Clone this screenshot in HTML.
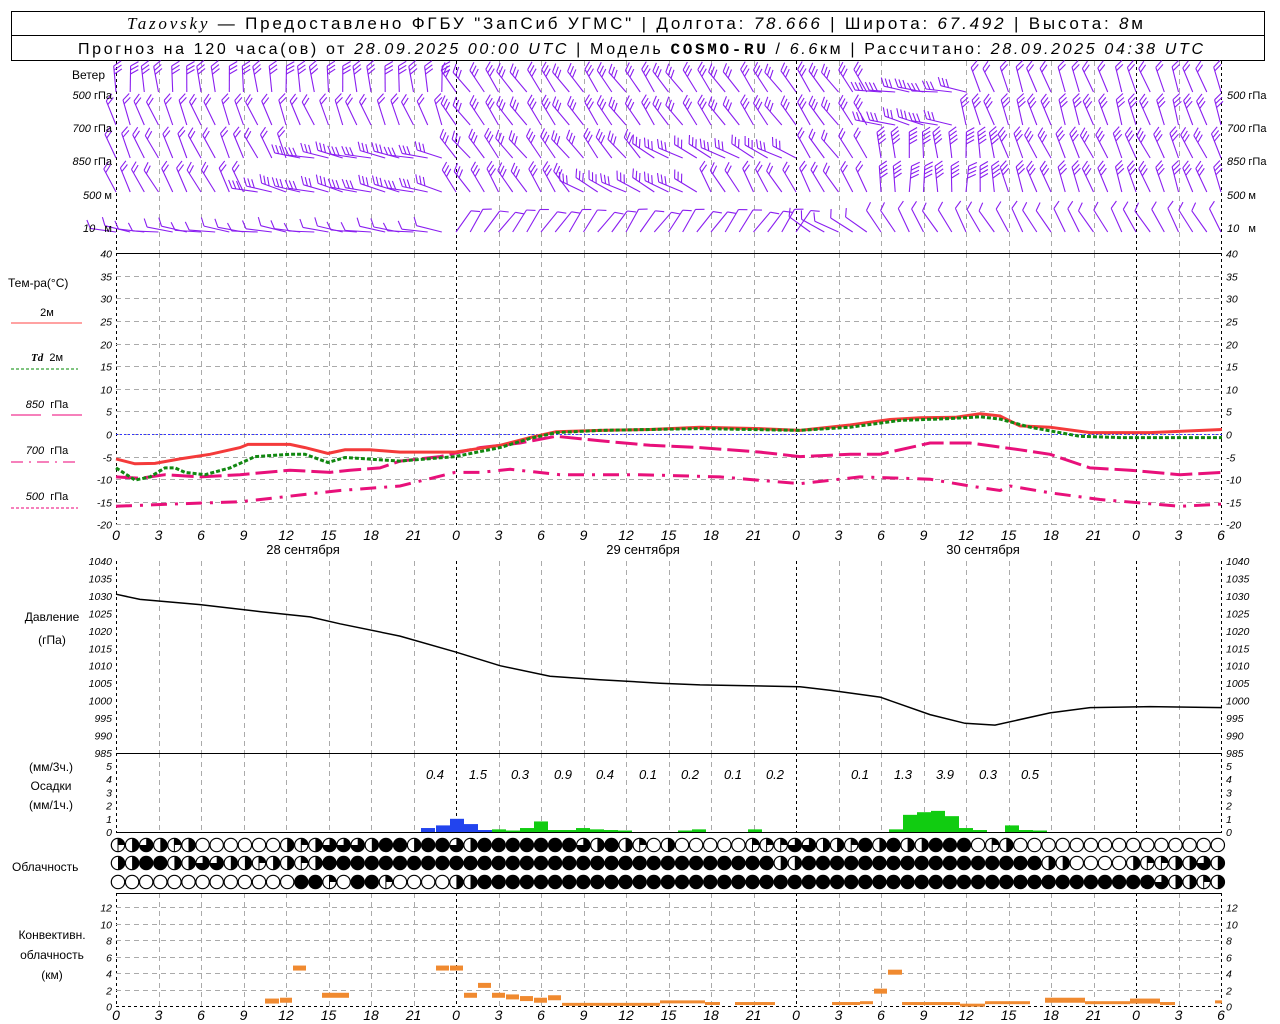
<!DOCTYPE html>
<html><head><meta charset="utf-8"><style>
html,body{margin:0;padding:0;background:#fff;}
svg{display:block;}
text{font-family:"Liberation Sans",sans-serif;}
.t{font-size:10.5px;font-style:italic;fill:#000;}
.l{font-size:12px;fill:#000;}
.ax{font-size:14px;font-style:italic;}
</style></head><body>
<svg id="s" width="1280" height="1024" viewBox="0 0 1280 1024" xmlns="http://www.w3.org/2000/svg">
<rect width="1280" height="1024" fill="#fff"/>
<rect x="11.5" y="11.5" width="1253" height="49" fill="none" stroke="#000"/>
<line x1="11" y1="35.5" x2="1265" y2="35.5" stroke="#000"/>
<text x="127" y="29" font-size="17" textLength="1016" lengthAdjust="spacing"><tspan font-family="Liberation Serif" font-style="italic">Tazovsky</tspan> — Предоставлено ФГБУ "ЗапСиб УГМС" | Долгота: <tspan font-style="italic">78.666</tspan> | Широта: <tspan font-style="italic">67.492</tspan> | Высота: <tspan font-style="italic">8</tspan>м</text>
<text x="78" y="54" font-size="16" textLength="1125" lengthAdjust="spacing">Прогноз на 120 часа(ов) от <tspan font-style="italic">28.09.2025 00:00 UTC</tspan> | Модель <tspan font-family="Liberation Mono" font-weight="bold">COSMO-RU</tspan> / <tspan font-style="italic">6.6</tspan>км | Рассчитано: <tspan font-style="italic">28.09.2025 04:38 UTC</tspan></text>

<g id="grid"></g>
<g id="wind"></g>
<g id="series"></g>
<g id="clouds"></g>

<g class="l">
<text x="72" y="79" font-size="12">Ветер</text>
<text x="112" y="99" text-anchor="end" font-size="11"><tspan font-style="italic">500</tspan> гПа</text>
<text x="112" y="132" text-anchor="end" font-size="11"><tspan font-style="italic">700</tspan> гПа</text>
<text x="112" y="165" text-anchor="end" font-size="11"><tspan font-style="italic">850</tspan> гПа</text>
<text x="112" y="199" text-anchor="end" font-size="11"><tspan font-style="italic">500</tspan> м</text>
<text x="112" y="232" text-anchor="end" font-size="11"><tspan font-style="italic">10</tspan>&#160;&#160;&#160;м</text>
<text x="1227" y="99" font-size="11"><tspan font-style="italic">500</tspan> гПа</text>
<text x="1227" y="132" font-size="11"><tspan font-style="italic">700</tspan> гПа</text>
<text x="1227" y="165" font-size="11"><tspan font-style="italic">850</tspan> гПа</text>
<text x="1227" y="199" font-size="11"><tspan font-style="italic">500</tspan> м</text>
<text x="1227" y="232" font-size="11"><tspan font-style="italic">10</tspan>&#160;&#160;&#160;м</text>

<text x="8" y="287" font-size="12">Тем-ра(°С)</text>
<text x="47" y="316" font-size="11" text-anchor="middle">2м</text>
<line x1="11" y1="323" x2="82" y2="323" stroke="#f44"/>
<text x="47" y="361" font-size="11" text-anchor="middle"><tspan font-family="Liberation Serif" font-style="italic" font-weight="bold">Td</tspan>&#160;&#160;2м</text>
<line x1="11" y1="369" x2="78" y2="369" stroke="#080" stroke-dasharray="3,2"/>
<text x="47" y="408" font-size="11" text-anchor="middle"><tspan font-style="italic">850</tspan>&#160;&#160;гПа</text>
<line x1="11" y1="415" x2="41" y2="415" stroke="#e07"/><line x1="52" y1="415" x2="82" y2="415" stroke="#e07"/>
<text x="47" y="454" font-size="11" text-anchor="middle"><tspan font-style="italic">700</tspan>&#160;&#160;гПа</text>
<line x1="11" y1="462" x2="78" y2="462" stroke="#e07" stroke-dasharray="12,6,2,6"/>
<text x="47" y="500" font-size="11" text-anchor="middle"><tspan font-style="italic">500</tspan>&#160;&#160;гПа</text>
<line x1="11" y1="508" x2="78" y2="508" stroke="#e07" stroke-dasharray="3,2"/>

<text x="52" y="621" font-size="12" text-anchor="middle">Давление</text>
<text x="52" y="644" font-size="12" text-anchor="middle">(гПа)</text>

<text x="51" y="771" font-size="12" text-anchor="middle">(мм/3ч.)</text>
<text x="51" y="790" font-size="12" text-anchor="middle">Осадки</text>
<text x="51" y="809" font-size="12" text-anchor="middle">(мм/1ч.)</text>

<text x="12" y="871" font-size="12">Облачность</text>

<text x="52" y="939" font-size="12" text-anchor="middle">Конвективн.</text>
<text x="52" y="959" font-size="12" text-anchor="middle">облачность</text>
<text x="52" y="979" font-size="12" text-anchor="middle">(км)</text>

<text x="303" y="554" font-size="13" text-anchor="middle">28 сентября</text>
<text x="643" y="554" font-size="13" text-anchor="middle">29 сентября</text>
<text x="983" y="554" font-size="13" text-anchor="middle">30 сентября</text>

<g font-size="13" font-style="italic">
<text x="435" y="779" text-anchor="middle">0.4</text>
<text x="478" y="779" text-anchor="middle">1.5</text>
<text x="520" y="779" text-anchor="middle">0.3</text>
<text x="563" y="779" text-anchor="middle">0.9</text>
<text x="605" y="779" text-anchor="middle">0.4</text>
<text x="648" y="779" text-anchor="middle">0.1</text>
<text x="690" y="779" text-anchor="middle">0.2</text>
<text x="733" y="779" text-anchor="middle">0.1</text>
<text x="775" y="779" text-anchor="middle">0.2</text>
<text x="860" y="779" text-anchor="middle">0.1</text>
<text x="903" y="779" text-anchor="middle">1.3</text>
<text x="945" y="779" text-anchor="middle">3.9</text>
<text x="988" y="779" text-anchor="middle">0.3</text>
<text x="1030" y="779" text-anchor="middle">0.5</text>
</g>
</g>
<g id="ticks"></g>
</svg>
<script>
(function(){
function X(h){return 116+h*340/24;}
var g='',w='',s='',c='',t='';
var panels=[[61,253],[253,525],[561,753],[753,832],[893,1006]];
for(var k=0;k<=26;k++){
  var x=Math.round(X(k*3))+0.5;
  var day=(k%8==0)||k==26;
  panels.forEach(function(p){
    g+='<line x1="'+x+'" y1="'+p[0]+'" x2="'+x+'" y2="'+p[1]+'" stroke="'+(day?'#000':'#aaa')+'" stroke-dasharray="'+(day?'3,3':'5,4')+'"/>';
  });
}
function TY(d){return 434-d*4.52;}
for(var d=-20;d<=40;d+=5){
  var y=Math.round(TY(d))+0.5;
  if(d<40) g+='<line x1="116" y1="'+y+'" x2="1222" y2="'+y+'" stroke="#aaa" stroke-dasharray="5,4"/>';
  t+='<text class="t" x="112" y="'+(y+4)+'" text-anchor="end">'+d+'</text><text class="t" x="1226" y="'+(y+4)+'">'+d+'</text>';
}
g+='<line x1="116" y1="253.5" x2="1222" y2="253.5" stroke="#000"/>';
g+='<line x1="116" y1="434.5" x2="1222" y2="434.5" stroke="#33f" stroke-dasharray="2,2"/>';
function PY(p){return 561+(1040-p)*192/55;}
for(var p=985;p<=1040;p+=5){var y=PY(p);t+='<text class="t" x="112" y="'+(y+4)+'" text-anchor="end">'+p+'</text><text class="t" x="1226" y="'+(y+4)+'">'+p+'</text>';}
g+='<line x1="116" y1="753.5" x2="1222" y2="753.5" stroke="#000"/>';
for(var v=0;v<=5;v++){var y=832-v*13.2;t+='<text class="t" x="112" y="'+(y+4)+'" text-anchor="end">'+v+'</text><text class="t" x="1226" y="'+(y+4)+'">'+v+'</text>';}
g+='<line x1="116" y1="832.5" x2="1222" y2="832.5" stroke="#000"/>';
function CY(v){return 1006-v*8.25;}
g+='<line x1="116" y1="893.5" x2="1222" y2="893.5" stroke="#000"/>';
for(var v=0;v<=12;v+=2){var y=Math.round(CY(v))+0.5;
  if(v>0) g+='<line x1="116" y1="'+y+'" x2="1222" y2="'+y+'" stroke="#aaa" stroke-dasharray="5,4"/>';
  else g+='<line x1="116" y1="'+y+'" x2="1222" y2="'+y+'" stroke="#000" stroke-dasharray="3,3"/>';
  t+='<text class="t" x="112" y="'+(y+4)+'" text-anchor="end">'+v+'</text><text class="t" x="1226" y="'+(y+4)+'">'+v+'</text>';}
var hl=[0,3,6,9,12,15,18,21];
for(var k=0;k<=26;k++){var lab=hl[k%8];var x=X(k*3);
  t+='<text class="ax" x="'+x+'" y="540" text-anchor="middle">'+lab+'</text>';
  t+='<text class="ax" x="'+x+'" y="1020" text-anchor="middle">'+lab+'</text>';}
var rows=[[92,[[116,450,-5,3],[450,880,-35,3],[880,970,-82,3],[970,1223,-20,2]]],
[125,[[116,450,-22,2],[450,880,-35,3],[880,960,-75,3],[960,1223,-18,3]]],
[158,[[116,300,-25,2],[300,450,-78,3],[450,650,-38,3],[650,800,-62,3],[800,880,-35,2],[880,1000,-5,4],[1000,1223,-25,3]]],
[192,[[116,250,-28,2],[250,450,-76,3],[450,580,-32,3],[580,700,-62,3],[700,880,-30,2],[880,1000,0,4],[1000,1223,-20,3]]],
[232,[[116,450,-82,1],[450,800,35,1],[800,880,-60,1],[880,1223,-30,1]]]];
rows.forEach(function(r){
  var by=r[0];
  for(var i=0;i<=78;i++){
    var x=X(i);var seg=null;
    r[1].forEach(function(sg){if(x>=sg[0]&&x<sg[1])seg=sg;});
    if(!seg)continue;
    var a=(seg[2]+Math.sin(i*1.7)*6)*Math.PI/180,L=26;
    var tx=x+L*Math.sin(a),ty=by-L*Math.cos(a);
    w+='<line x1="'+x.toFixed(1)+'" y1="'+by+'" x2="'+tx.toFixed(1)+'" y2="'+ty.toFixed(1)+'"/>';
    var fa=a+Math.PI/3;
    for(var f=0;f<seg[3];f++){
      var px=tx-f*4*Math.sin(a),py=ty+f*4*Math.cos(a);
      w+='<line x1="'+px.toFixed(1)+'" y1="'+py.toFixed(1)+'" x2="'+(px+9*Math.sin(fa)).toFixed(1)+'" y2="'+(py-9*Math.cos(fa)).toFixed(1)+'"/>';
    }
  }
});
document.getElementById('wind').innerHTML='<g stroke="#8a1ef0" stroke-width="1.1" fill="none">'+w+'</g>';
function path(pts,fy){return pts.map(function(p,i){return (i?'L':'M')+p[0]+' '+fy(p[1]).toFixed(1);}).join(' ');}
var red=[[116,-5.5],[135,-6.6],[155,-6.5],[180,-5.5],[210,-4.5],[240,-3],[248,-2.3],[290,-2.3],[305,-3],[328,-4.3],[345,-3.5],[370,-3.5],[400,-4],[455,-4],[500,-2.5],[530,-0.8],[556,0.5],[600,0.8],[650,1],[700,1.5],[760,1.2],[800,0.8],[850,2],[890,3.2],[920,3.6],[955,3.7],[980,4.5],[1000,4],[1020,1.8],[1050,1.5],[1090,0.3],[1150,0.3],[1222,1]];
var grn=[[116,-7.5],[135,-10.2],[150,-9.5],[165,-7.5],[175,-7.5],[185,-8.5],[205,-9],[230,-7.5],[255,-5],[290,-4.5],[305,-4.5],[328,-6.3],[345,-5.2],[400,-6],[455,-5],[500,-3],[530,-1],[556,0.3],[600,0.8],[700,1.2],[800,0.8],[850,1.5],[900,3],[950,3.4],[980,3.8],[1000,3.3],[1030,1.5],[1080,-0.5],[1120,-0.8],[1222,-0.8]];
var p850=[[116,-9.5],[140,-9.8],[165,-9],[200,-9.5],[240,-9],[290,-8],[330,-8.5],[350,-8],[380,-7.5],[400,-6],[440,-5],[480,-3],[520,-2],[556,-0.5],[600,-1.5],[650,-2.5],[700,-3],[760,-4],[800,-5],[850,-4.5],[880,-4.5],[930,-2],[970,-2],[1020,-3.5],[1050,-4.5],[1090,-7.5],[1130,-8],[1180,-9],[1222,-8.5]];
var p500=[[116,-16],[170,-15.5],[240,-15],[300,-13.5],[340,-12.5],[400,-11.5],[455,-8.5],[480,-8.5],[510,-7.8],[560,-9],[640,-9],[720,-9.5],[800,-11],[860,-9.5],[930,-10],[970,-11.5],[1000,-12.5],[1010,-11.5],[1050,-13],[1100,-14.5],[1180,-16],[1222,-15.5]];
var pres=[[116,1030.5],[140,1029],[200,1027.5],[260,1025.5],[310,1024],[340,1022],[400,1018.5],[455,1014],[500,1010],[550,1007],[600,1006],[660,1005],[700,1004.5],[800,1004],[830,1003],[880,1001],[930,996],[965,993.5],[995,993],[1050,996.5],[1090,998],[1150,998.3],[1222,998]];
s+='<path d="'+path(p500,TY)+'" stroke="#e8107a" stroke-width="3" fill="none" stroke-dasharray="16,8,3,8"/>';
s+='<path d="'+path(p850,TY)+'" stroke="#e8107a" stroke-width="3" fill="none" stroke-dasharray="22,6"/>';
s+='<path d="'+path(red,TY)+'" stroke="#f43a3a" stroke-width="3" fill="none"/>';
s+='<path d="'+path(grn,TY)+'" stroke="#118811" stroke-width="3" fill="none" stroke-dasharray="4,2"/>';
s+='<path d="'+path(pres,PY)+'" stroke="#000" stroke-width="1.5" fill="none"/>';
var pb=[[428,0.3,'#2244ee'],[443,0.5,'#2244ee'],[457,1.0,'#2244ee'],[471,0.6,'#2244ee'],[485,0.15,'#2244ee'],[499,0.2,'#11cc11'],[513,0.05,'#11cc11'],[527,0.3,'#11cc11'],[541,0.8,'#11cc11'],[555,0.15,'#11cc11'],[569,0.15,'#11cc11'],[583,0.3,'#11cc11'],[597,0.2,'#11cc11'],[611,0.15,'#11cc11'],[625,0.05,'#11cc11'],[685,0.1,'#11cc11'],[699,0.2,'#11cc11'],[755,0.2,'#11cc11'],[896,0.2,'#11cc11'],[910,1.3,'#11cc11'],[924,1.5,'#11cc11'],[938,1.6,'#11cc11'],[952,1.2,'#11cc11'],[966,0.3,'#11cc11'],[980,0.15,'#11cc11'],[1012,0.5,'#11cc11'],[1026,0.15,'#11cc11'],[1040,0.1,'#11cc11']];
pb.forEach(function(b){var h=Math.max(1.5,b[1]*13.2);s+='<rect x="'+(b[0]-7)+'" y="'+(832-h)+'" width="14" height="'+h+'" fill="'+b[2]+'"/>';});
var cb=[[265,279,0.6],[280,292,0.7],[293,306,4.6],[322,349,1.3],[436,449,4.6],[450,463,4.6],[464,477,1.3],[478,491,2.5],[492,505,1.3],[506,519,1.1],[520,533,0.9],[534,547,0.7],[548,561,1.0],[562,660,0.2],[660,705,0.5],[705,720,0.3],[735,775,0.3],[832,860,0.3],[860,873,0.4],[874,887,1.8],[888,902,4.1],[902,960,0.3],[960,985,0.1],[985,1030,0.4],[1045,1085,0.7],[1085,1130,0.4],[1130,1160,0.6],[1160,1175,0.3],[1215,1222,0.5]];
cb.forEach(function(b){var h=b[2]>0.5?5:3;s+='<rect x="'+b[0]+'" y="'+(CY(b[2])-h/2)+'" width="'+(b[1]-b[0])+'" height="'+h+'" fill="#f08a30"/>';});
function rep(ch,n){return new Array(n+1).join(ch);}
var crow=[
 'qrtrqr'+'oooooo'+'rqrttt'+'rffrff'+'trffff'+'ffftrf'+'rqor'+'ooooo'+'qqqttrrqfrfrrfff'+'oqr'+rep('o',15),
 'rrffrrttrrqrrqr'+rep('f',25)+rep('f',7)+'rr'+rep('f',17)+'rroooorqqrrtr',
 rep('o',13)+'ffqoffqoooorr'+rep('f',14)+rep('f',34)+'trrqr'];
var cys=[845,863,882];
crow.forEach(function(str,ri){
  var cy=cys[ri];
  for(var i=0;i<str.length&&i<79;i++){
    var cx=118+i*14.1,R=6.7,ch=str[i];
    if(ch=='f'){c+='<circle cx="'+cx+'" cy="'+cy+'" r="'+(R+0.5)+'" fill="#000"/>';continue;}
    c+='<circle cx="'+cx+'" cy="'+cy+'" r="'+R+'" fill="#fff" stroke="#000" stroke-width="1.2"/>';
    if(ch=='r') c+='<path d="M'+cx+' '+(cy-R)+'A'+R+' '+R+' 0 0 1 '+cx+' '+(cy+R)+'Z" fill="#000"/>';
    if(ch=='q') c+='<path d="M'+cx+' '+cy+'L'+cx+' '+(cy-R)+'A'+R+' '+R+' 0 0 1 '+(cx+R)+' '+cy+'Z" fill="#000"/><line x1="'+cx+'" y1="'+(cy-R)+'" x2="'+cx+'" y2="'+(cy+R)+'" stroke="#000"/>';
    if(ch=='t') c+='<path d="M'+cx+' '+cy+'L'+cx+' '+(cy-R)+'A'+R+' '+R+' 0 1 1 '+(cx-R)+' '+cy+'Z" fill="#000"/>';
  }
});
document.getElementById('grid').innerHTML=g;
document.getElementById('series').innerHTML=s;
document.getElementById('clouds').innerHTML=c;
document.getElementById('ticks').innerHTML=t;
})();
</script>
</body></html>
